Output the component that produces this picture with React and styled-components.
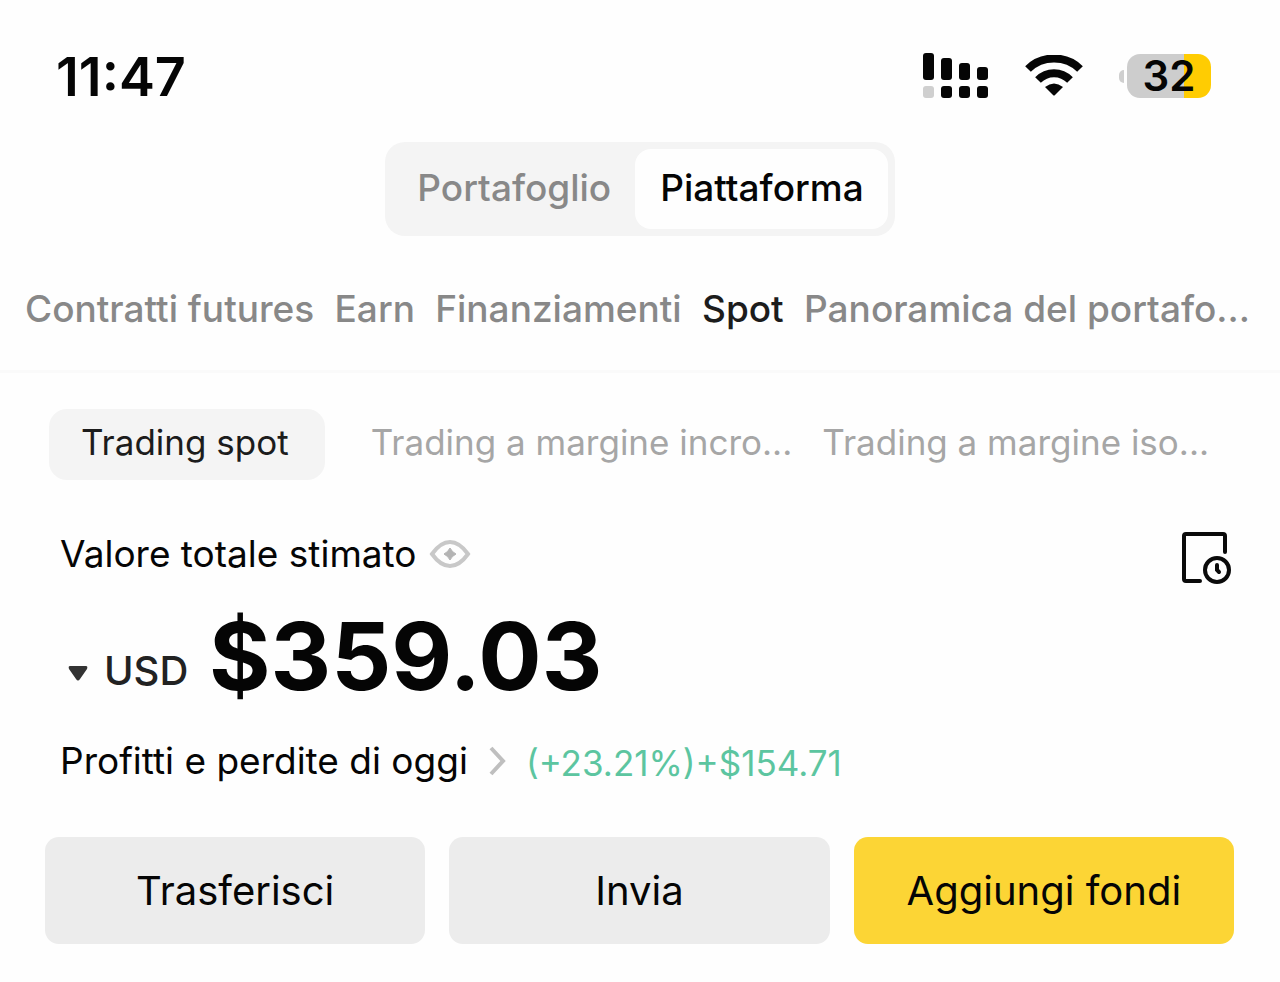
import React, { useState } from 'react';
import styled, { createGlobalStyle } from 'styled-components';

const GlobalStyle = createGlobalStyle`
	* {
		box-sizing: border-box;
	}
	body {
		margin: 0;
		background-color: #fefefe;
		color: #050505;
		font-family: Inter, 'Liberation Sans', sans-serif;
	}
	button, select {
		margin: 0;
		padding: 0;
		border: 0;
		background: none;
		color: inherit;
		font: inherit;
		white-space: nowrap;
		cursor: pointer;
	}
	svg {
		display: block;
		flex: none;
	}
`;

const StatusBar = styled.header`
	display: flex;
	justify-content: space-between;
	align-items: center;
	padding: 44px 69px 0 56px;
`;

const Time = styled.time`
	padding-top: 2px;
	font-size: 54px;
	line-height: 62px;
	font-weight: 600;
`;

const StatusIcons = styled.div`
	display: flex;
	align-items: center;
	gap: 36px;
`;

const Battery = styled.div`
	display: flex;
	align-items: center;
	gap: 3px;
	&::before {
		content: '';
		width: 5px;
		height: 13px;
		border-radius: 5px 0 0 5px;
		background-color: #cfcfcf;
	}
`;

const BatteryLevel = styled.div`
	width: 84px;
	border-radius: 13px;
	background: linear-gradient(to left, #ffcc02 32%, #cdcdcd 32%);
	font-size: 42px;
	line-height: 44px;
	font-weight: 600;
	text-align: center;
`;

const Segment = styled.div`
	display: flex;
	width: fit-content;
	margin: 34px auto 0;
	padding: 7px;
	border-radius: 20px;
	background-color: #f4f4f4;
`;

const SegmentButton = styled.button`
	padding: 17px 24px 19px 25px;
	border-radius: 16px;
	font-size: 37px;
	line-height: 44px;
	font-weight: 500;
	background-color: ${({ $active }) => ($active ? '#fefefe' : 'transparent')};
	color: ${({ $active }) => ($active ? '#050505' : '#888')};
`;

const Tabs = styled.nav`
	display: flex;
	justify-content: space-between;
	padding: 49px 30px 37px 25px;
	border-bottom: 3px solid #fafafa;
`;

const Tab = styled.button`
	font-size: 37px;
	line-height: 48px;
	font-weight: 500;
	color: ${({ $active }) => ($active ? '#1c1c1c' : '#888')};
`;

const SubTabs = styled.nav`
	display: flex;
	align-items: center;
	gap: 30px;
	padding: 36px 49px 0;
`;

const SubTab = styled.button`
	padding: ${({ $active }) => ($active ? '11px 36px 16px 32px' : '11px 0 16px')};
	margin-right: ${({ $active }) => ($active ? '16px' : '0')};
	border-radius: 18px;
	font-size: 35px;
	line-height: 44px;
	font-weight: 400;
	background-color: ${({ $active }) => ($active ? '#f4f4f4' : 'transparent')};
	color: ${({ $active }) => ($active ? '#1c1c1c' : '#a6a6a6')};
`;

const Summary = styled.section`
	padding: 50px 48px 0 60px;
`;

const SummaryHeader = styled.div`
	display: flex;
	justify-content: space-between;
	align-items: flex-start;
`;

const Label = styled.div`
	display: flex;
	align-items: center;
	gap: 12px;
	font-size: 37px;
	line-height: 48px;
	font-weight: 400;
`;

const Balance = styled.div`
	display: flex;
	align-items: flex-end;
	gap: 20px;
	padding: 13px 0 0 8px;
`;

const Currency = styled.label`
	display: flex;
	align-items: center;
	gap: 16px;
	padding-bottom: 20px;
	& > svg {
		margin-top: 4px;
	}
	& > select {
		appearance: none;
		font-size: 40px;
		line-height: 48px;
		font-weight: 500;
		color: #222;
	}
`;

const Amount = styled.div`
	font-size: 94px;
	line-height: 118px;
	font-weight: 700;
`;

const ProfitRow = styled.div`
	display: flex;
	align-items: center;
	gap: 20px;
	padding-top: 20px;
	font-size: 37px;
	line-height: 48px;
`;

const Gain = styled.span`
	color: #5cc5a0;
	font-size: 35px;
	padding-top: 4px;
`;

const Actions = styled.div`
	display: grid;
	grid-template-columns: repeat(3, 1fr);
	gap: 24px;
	padding: 50px 46px 36px 45px;
`;

const ActionButton = styled.button`
	height: 107px;
	border-radius: 14px;
	font-size: 40px;
	line-height: 52px;
	background-color: ${({ $primary }) => ($primary ? '#fcd535' : '#ececec')};
`;

const SignalIcon = () => (
	<svg width='66' height='46' viewBox='0 0 66 46' fill='#050505' aria-hidden='true'>
		<rect x='0' y='0' width='11' height='27' rx='3' />
		<rect x='18' y='5' width='11' height='22' rx='3' />
		<rect x='36' y='10' width='11' height='17' rx='3' />
		<rect x='54' y='14' width='11' height='13' rx='3' />
		<rect x='0' y='33' width='11' height='12' rx='3' fill='#cfcfcf' />
		<rect x='18' y='33' width='11' height='12' rx='3' />
		<rect x='36' y='33' width='11' height='12' rx='3' />
		<rect x='54' y='33' width='11' height='12' rx='3' />
	</svg>
);

const WifiIcon = () => (
	<svg width='58' height='42' viewBox='0 0 58 42' aria-hidden='true'>
		<path d='M3 14 C17 0 41 0 55 14' fill='none' stroke='#050505' strokeWidth='8' />
		<path d='M13 25 C22 16 36 16 45 25' fill='none' stroke='#050505' strokeWidth='8' />
		<path d='M20 32 Q29 25 38 32 L30 40 Q29 41 28 40 Z' fill='#050505' />
	</svg>
);

const EyeIcon = () => (
	<svg width='42' height='30' viewBox='0 0 42 30' aria-hidden='true'>
		<path
			d='M3 15 C8 8 14 3 21 3 S34 8 39 15 C34 22 28 27 21 27 S8 22 3 15 Z'
			fill='none'
			stroke='#c8c8c8'
			strokeWidth='4'
		/>
		<path d='M21 9 Q23 13 27 15 Q23 17 21 21 Q19 17 15 15 Q19 13 21 9 Z' fill='#b4b4b4' stroke='#b4b4b4' />
	</svg>
);

const HistoryIcon = () => (
	<svg width='52' height='54' viewBox='0 0 52 54' fill='none' stroke='#0a0a0a' strokeWidth='4' aria-hidden='true'>
		<path d='M20 51 H6 Q4 51 4 49 V6 Q4 4 6 4 H43 Q45 4 45 6 V22' strokeLinecap='round' />
		<circle cx='37' cy='40' r='12' />
		<path d='M37 35 V40 L39 42' strokeLinecap='round' />
	</svg>
);

const CaretIcon = () => (
	<svg width='20' height='17' viewBox='0 0 20 17' aria-hidden='true'>
		<path d='M2 1 H18 Q20 1 19 4 L12 14 Q10 17 8 14 L1 4 Q0 1 2 1 Z' fill='#333' />
	</svg>
);

const ChevronIcon = () => (
	<svg width='18' height='30' viewBox='0 0 18 30' aria-hidden='true'>
		<path d='M3 2 L15 15 L3 28' fill='none' stroke='#bfbfbf' strokeWidth='4' />
	</svg>
);

const tabs = ['Contratti futures', 'Earn', 'Finanziamenti', 'Spot', 'Panoramica del portafo...'];
const subTabs = ['Trading spot', 'Trading a margine incro...', 'Trading a margine iso...'];

const App = () => {
	const [view, setView] = useState('Piattaforma');
	const [tab, setTab] = useState('Spot');
	const [subTab, setSubTab] = useState('Trading spot');

	return (
		<>
			<GlobalStyle />
			<StatusBar>
				<Time>11:47</Time>
				<StatusIcons>
					<SignalIcon />
					<WifiIcon />
					<Battery>
						<BatteryLevel>32</BatteryLevel>
					</Battery>
				</StatusIcons>
			</StatusBar>
			<main>
				<Segment>
					{['Portafoglio', 'Piattaforma'].map(name => (
						<SegmentButton key={name} $active={name === view} onClick={() => setView(name)}>
							{name}
						</SegmentButton>
					))}
				</Segment>
				<Tabs>
					{tabs.map(name => (
						<Tab key={name} $active={name === tab} onClick={() => setTab(name)}>
							{name}
						</Tab>
					))}
				</Tabs>
				<SubTabs>
					{subTabs.map(name => (
						<SubTab key={name} $active={name === subTab} onClick={() => setSubTab(name)}>
							{name}
						</SubTab>
					))}
				</SubTabs>
				<Summary>
					<SummaryHeader>
						<Label>
							Valore totale stimato
							<button aria-label='Nascondi saldo'>
								<EyeIcon />
							</button>
						</Label>
						<button aria-label='Cronologia'>
							<HistoryIcon />
						</button>
					</SummaryHeader>
					<Balance>
						<Currency>
							<CaretIcon />
							<select aria-label='Valuta' defaultValue='USD'>
								<option>USD</option>
							</select>
						</Currency>
						<Amount>$359.03</Amount>
					</Balance>
					<ProfitRow>
						Profitti e perdite di oggi
						<ChevronIcon />
						<Gain>(+23.21%)+$154.71</Gain>
					</ProfitRow>
				</Summary>
				<Actions>
					<ActionButton>Trasferisci</ActionButton>
					<ActionButton>Invia</ActionButton>
					<ActionButton $primary>Aggiungi fondi</ActionButton>
				</Actions>
			</main>
		</>
	);
};

export default App;
